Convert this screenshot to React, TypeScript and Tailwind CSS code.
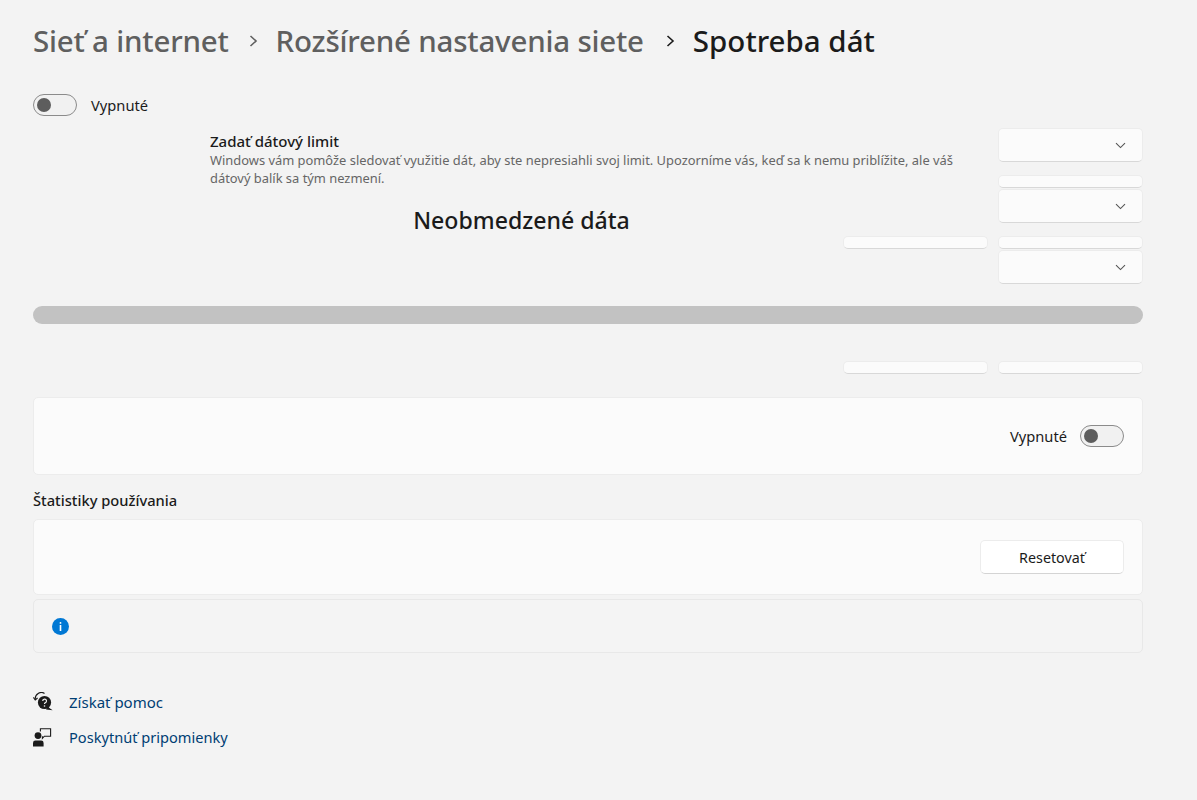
const F = "font-['Noto_Sans','Open_Sans',sans-serif]";

function Toggle() {
  return (
    <div className="flex h-[22px] w-[44px] shrink-0 items-center rounded-full border border-[#8b8b8b] bg-[#f1f1f1] pl-[3px]">
      <div className="h-[14px] w-[14px] rounded-full bg-[#5d5d5d]" />
    </div>
  );
}

function Chevron() {
  return (
    <svg width="11" height="7" viewBox="0 0 11 7" fill="none" className="shrink-0">
      <path d="M1 1.2 L5.5 5.6 L10 1.2" stroke="#555" strokeWidth="1.1" />
    </svg>
  );
}

function Dropdown({ className = "" }: { className?: string }) {
  return (
    <div className={`flex h-[34px] items-center justify-end rounded-[5px] border border-[#ececec] border-b-[#d8d8d8] bg-[#fbfbfb] pr-[16px] ${className}`}>
      <Chevron />
    </div>
  );
}

function Slim({ className = "" }: { className?: string }) {
  return <div className={`h-[13px] rounded-[5px] border border-[#ececec] border-b-[#d8d8d8] bg-[#fbfbfb] ${className}`} />;
}

function HelpIcon() {
  return (
    <svg width="20" height="20" viewBox="0 0 20 20" fill="none">
      <path d="M2.2 7 A6.2 6.2 0 0 1 11.5 1.4" stroke="#1b1b1b" strokeWidth="1.2" />
      <path d="M0.4 5.4 L2.2 8 L4.6 6" stroke="#1b1b1b" strokeWidth="1.1" />
      <circle cx="11.5" cy="10.5" r="6.6" fill="#1b1b1b" />
      <path d="M15 15 L19.6 18.2 L13 17.6 Z" fill="#1b1b1b" />
      <path d="M9.7 9 A1.9 1.9 0 1 1 12.1 10.8 Q11.5 11.1 11.5 12" stroke="#f3f3f3" strokeWidth="1.2" />
      <circle cx="11.5" cy="14" r="0.8" fill="#f3f3f3" />
    </svg>
  );
}

function FeedbackIcon() {
  return (
    <svg width="20" height="20" viewBox="0 0 20 20" fill="none">
      <circle cx="5" cy="7.6" r="3.4" fill="#1b1b1b" />
      <path d="M0 18.6 V15 Q0 12.6 2.4 12.6 H8.2 Q10.6 12.6 10.6 15 V18.6 Z" fill="#1b1b1b" />
      <path d="M7.4 3.4 V0.8 H17.6 V8.2 H11.4 L9.4 10.4 V8.2" stroke="#1b1b1b" strokeWidth="1.1" />
    </svg>
  );
}

export default function App() {
  return (
    <div className={`${F} h-[800px] w-full overflow-hidden bg-[#f3f3f3] pl-[33px] text-[#1b1b1b]`}>
      <div className="w-[1110px]">
        <div className="mt-[22px] flex h-[37px] items-center text-[29.5px] font-medium leading-[37px] tracking-[-0.2px]">
          <span className="text-[#5f5f5f]">Sieť a internet</span>
          <svg width="10" height="14" viewBox="0 0 10 14" fill="none" className="ml-[20px] mr-[17px]">
            <path d="M1.5 2 L7 7 L1.5 12" stroke="#5f5f5f" strokeWidth="1.6" />
          </svg>
          <span className="text-[#5f5f5f]">Rozšírené nastavenia siete</span>
          <svg width="10" height="14" viewBox="0 0 10 14" fill="none" className="ml-[22px] mr-[17px]">
            <path d="M1.5 2 L7 7 L1.5 12" stroke="#1b1b1b" strokeWidth="1.6" />
          </svg>
          <span className="tracking-normal">Spotreba dát</span>
        </div>

        <div className="mt-[35px] flex h-[22px] items-center gap-[14px] text-[14.7px]">
          <Toggle />
          <span className="pt-[1px]">Vypnuté</span>
        </div>

        <div className="mt-[12px] grid grid-cols-[800px_145px_145px] gap-x-[10px]">
          <div className="col-span-2 col-start-1 row-span-3 row-start-1 h-[90px]">
            <div className="pl-[177px] pt-[3px]">
              <div className="text-[15px] font-medium leading-[20px]">Zadať dátový limit</div>
              <div className="w-[760px] text-[12.9px] leading-[18px] text-[#666]">
                Windows vám pomôže sledovať využitie dát, aby ste nepresiahli svoj limit. Upozorníme vás, keď sa k nemu priblížite, ale váš dátový balík sa tým nezmení.
              </div>
            </div>
            <div className="pl-[22px] pt-[17px] text-center text-[23.1px] font-medium leading-[32px]">Neobmedzené dáta</div>
          </div>
          <Dropdown className="col-start-3 row-start-1" />
          <Slim className="col-start-3 row-start-2 mt-[13px]" />
          <Dropdown className="col-start-3 row-start-3 mt-[1px]" />
          <Slim className="col-start-2 row-start-4 mt-[13px]" />
          <Slim className="col-start-3 row-start-4 mt-[13px]" />
          <Dropdown className="col-start-3 row-start-5 mt-[1px]" />
        </div>

        <div className="mt-[22px] h-[18px] rounded-full bg-[#c2c2c2]" />

        <div className="mt-[37px] flex justify-end gap-[10px]">
          <Slim className="w-[145px]" />
          <Slim className="w-[145px]" />
        </div>

        <div className="mt-[23px] flex h-[78px] items-center justify-end gap-[13px] rounded-[5px] border border-[#ececec] bg-[#fbfbfb] pr-[18px] text-[14.7px]">
          <span className="pt-[1px]">Vypnuté</span>
          <Toggle />
        </div>

        <div className="mt-[15px] text-[14.7px] font-medium leading-[20px]">Štatistiky používania</div>

        <div className="mt-[9px] flex h-[76px] items-center justify-end rounded-[5px] border border-[#ececec] bg-[#fbfbfb] pr-[18px]">
          <button className="h-[34px] w-[144px] rounded-[5px] border border-[#ececec] border-b-[#d4d4d4] bg-white pt-[1px] text-[14.3px]">Resetovať</button>
        </div>

        <div className="mt-[4px] flex h-[54px] items-center rounded-[5px] border border-[#e8e8e8] bg-[#f4f4f4] pl-[18px]">
          <div className="flex h-[17px] w-[17px] items-center justify-center rounded-full bg-[#0078d4]">
            <svg width="3" height="9" viewBox="0 0 3 9"><rect x="0.6" y="0" width="1.8" height="1.8" rx="0.9" fill="#fff" /><rect x="0.7" y="3" width="1.6" height="6" fill="#fff" /></svg>
          </div>
        </div>

        <div className="mt-[39px] flex h-[20px] items-center gap-[16px] text-[15px] text-[#003e73]">
          <HelpIcon />
          <span>Získať pomoc</span>
        </div>
        <div className="mt-[16px] flex h-[20px] items-center gap-[16px] text-[14.6px] text-[#003e73]">
          <FeedbackIcon />
          <span>Poskytnúť pripomienky</span>
        </div>
      </div>
    </div>
  );
}
